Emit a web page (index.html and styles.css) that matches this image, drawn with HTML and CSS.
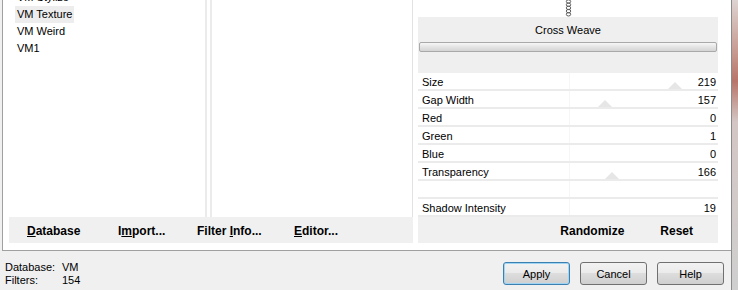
FILE: index.html
```html
<!DOCTYPE html>
<html>
	<head>
		<meta charset="UTF-8">
		<title>Filters Unlimited</title>
		<link rel="stylesheet" href="styles.css">
	</head>
	<body>
		<div class="window">
			<div class="panel">
				<div class="left">
					<div class="lists">
						<ul class="categories">
							<li>VM Stylize</li>
							<li class="sel">VM Texture</li>
							<li>VM Weird</li>
							<li>VM1</li>
						</ul>
						<div class="filters"></div>
					</div>
					<div class="toolbar">
						<span class="tb-btn tb-db"><u>D</u>atabase</span>
						<span class="tb-btn tb-import">I<u>m</u>port...</span>
						<span class="tb-btn tb-info">Filter <u>I</u>nfo...</span>
						<span class="tb-btn"><u>E</u>ditor...</span>
					</div>
				</div>
				<div class="right">
					<div class="chain">
						<svg width="7" height="17" viewBox="0 0 7 17">
							<ellipse cx="3.5" cy="1.5" rx="2.2" ry="1.7" fill="none" stroke="#5a5a5a" stroke-width="1"/>
							<ellipse cx="3.5" cy="4.7" rx="2.2" ry="1.7" fill="none" stroke="#5a5a5a" stroke-width="1"/>
							<ellipse cx="3.5" cy="7.9" rx="2.2" ry="1.7" fill="none" stroke="#5a5a5a" stroke-width="1"/>
							<ellipse cx="3.5" cy="11.1" rx="2.2" ry="1.7" fill="none" stroke="#5a5a5a" stroke-width="1"/>
							<ellipse cx="3.5" cy="14.3" rx="2.2" ry="1.7" fill="none" stroke="#5a5a5a" stroke-width="1"/>
						</svg>
					</div>
					<div class="effect">
						<div class="effect-name">Cross Weave</div>
						<div class="effect-bar"></div>
					</div>
					<div class="sliders">
						<div class="slider"><span>Size</span><span>219</span><i class="thumb" style="left: 250px"></i></div>
						<div class="slider"><span>Gap Width</span><span>157</span><i class="thumb" style="left: 180px"></i></div>
						<div class="slider"><span>Red</span><span>0</span></div>
						<div class="slider"><span>Green</span><span>1</span></div>
						<div class="slider"><span>Blue</span><span>0</span></div>
						<div class="slider"><span>Transparency</span><span>166</span><i class="thumb" style="left: 187px"></i></div>
						<div class="slider"><span></span><span></span></div>
						<div class="slider"><span>Shadow Intensity</span><span>19</span></div>
					</div>
					<div class="toolbar toolbar-right">
						<span class="tb-btn">Randomize</span>
						<span class="tb-btn">Reset</span>
					</div>
				</div>
			</div>
			<div class="footer">
				<div class="status">
					<span>Database:</span><span>VM</span>
					<span>Filters:</span><span>154</span>
				</div>
				<div class="buttons">
					<button class="btn default">Apply</button>
					<button class="btn">Cancel</button>
					<button class="btn">Help</button>
				</div>
			</div>
		</div>
		<div class="desk"></div>
	</body>
</html>
```

FILE: styles.css
```css
* {margin: 0; padding: 0; box-sizing: border-box;}
ul, li {list-style: none;}
html, body {height: 100%;}
body {
	display: flex;
	background: #f0f0f0;
	font: 11px "Liberation Sans", Arial, sans-serif;
	color: #000;
	overflow: hidden;
}
.window {
	width: 732px;
	height: 290px;
	border-right: 1px solid #8a8a8a;
	display: flex;
	flex-direction: column;
}
.panel {
	height: 251px;
	margin-left: 2px;
	background: #fff;
	border-left: 1px solid #a0a0a0;
	border-bottom: 1px solid #a0a0a0;
	display: flex;
}

/* left half: lists + tool buttons */
.left {
	width: 410px;
	display: flex;
	flex-direction: column;
}
.lists {
	height: 217px;
	display: flex;
}
.categories {
	width: 204px;
	border-right: 2px solid #ebebeb;
	padding-left: 12px;
	overflow: hidden;
}
.categories li {
	height: 17px;
	line-height: 17px;
	padding: 0 2px;
	width: fit-content;
}
.categories li:first-child {margin-top: -11px;}
.categories li.sel {background: #ededed;}
.filters {
	flex: 1;
	margin-left: 3px;
	border-left: 2px solid #ebebeb;
	border-right: 1px solid #e2e2e2;
}
.toolbar {
	height: 26px;
	padding-top: 2px;
	background: #f0f0f0;
	display: flex;
	align-items: center;
	font: bold 12px "Liberation Sans", Arial, sans-serif;
}
.left .toolbar {
	margin-left: 6px;
	padding-left: 18px;
}
.tb-db {width: 91px;}
.tb-import {width: 79px;}
.tb-info {width: 97px;}

/* right half: effect settings */
.right {
	flex: 1;
	padding: 0 13px 0 5px;
	display: flex;
	flex-direction: column;
}
.chain {
	height: 17px;
	display: flex;
	justify-content: center;
}
.effect {
	height: 56px;
	background: #efefef;
	padding-top: 6px;
}
.effect-name {
	text-align: center;
	line-height: 14px;
}
.effect-bar {
	height: 10px;
	margin: 5px 1px 0;
	border: 1px solid #a9a9a9;
	border-radius: 2px;
	background: linear-gradient(#f6f6f6, #e4e4e4 50%, #d4d4d4);
}
.slider {
	position: relative;
	height: 18px;
	padding: 2px 2px 0 4px;
	line-height: 14px;
	border-bottom: 2px solid #ebebeb;
	display: flex;
	justify-content: space-between;
	background: linear-gradient(to right, transparent 151px, #f6f6f6 151px, #f6f6f6 152px, transparent 152px);
}
.slider span {position: relative; z-index: 1;}
.thumb {
	position: absolute;
	bottom: 0;
	width: 0;
	height: 0;
	border-left: 7px solid transparent;
	border-right: 7px solid transparent;
	border-bottom: 7px solid #e6e6e6;
}
.toolbar-right {
	justify-content: flex-end;
	gap: 36px;
	padding-right: 25px;
}

/* status + dialog buttons */
.footer {
	flex: 1;
	display: flex;
	justify-content: space-between;
	padding: 0 7px 0 5px;
}
.status {
	display: grid;
	grid-template-columns: 57px auto;
	line-height: 13px;
	padding-top: 10px;
	align-content: start;
}
.buttons {
	display: flex;
	gap: 10px;
	padding-top: 11px;
}
.btn {
	width: 67px;
	height: 23px;
	border: 1px solid #707070;
	border-radius: 3px;
	background: linear-gradient(#f2f2f2, #ebebeb 45%, #dddddd 50%, #cfcfcf);
	font: 11px "Liberation Sans", Arial, sans-serif;
	color: #000;
}
.btn.default {
	border-color: #3c7fb1;
	box-shadow: inset 0 0 0 1px #9fd5f3;
}
.desk {
	flex: 1;
	background: linear-gradient(#ddd3d1, #c79990 18%, #b8746a 28%, #d3c6c4 42%, #cfcfcf 100%);
}
```
